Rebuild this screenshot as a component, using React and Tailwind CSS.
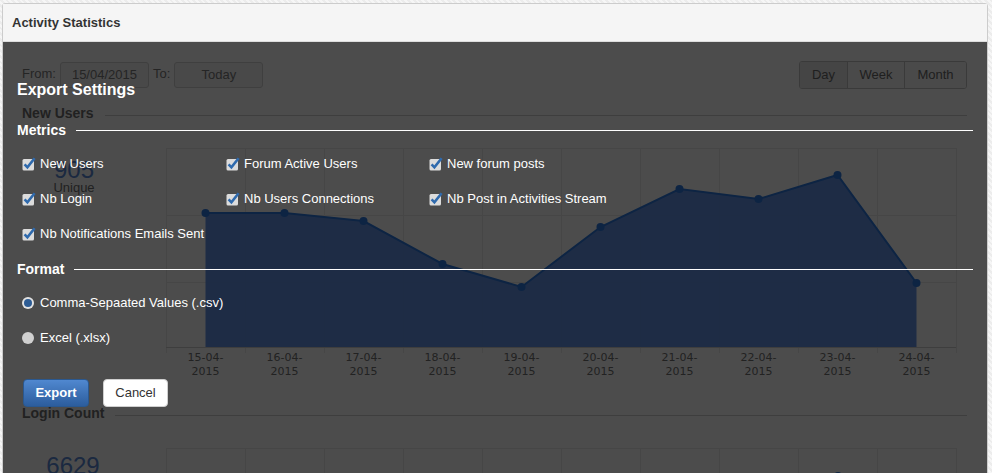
import React from 'react';

const days = ['15', '16', '17', '18', '19', '20', '21', '22', '23', '24'];
const points = [65, 65, 73, 116, 139, 79, 41, 51, 27, 135];

const metrics = [
    'New Users', 'Forum Active Users', 'New forum posts',
    'Nb Login', 'Nb Users Connections', 'Nb Post in Activities Stream',
    'Nb Notifications Emails Sent',
];

function Checkbox() {
    return (
        <svg width="14" height="14" viewBox="0 0 14 14" className="shrink-0">
            <rect x="0.5" y="2" width="11.5" height="11.5" rx="1.5" fill="#dcdcdc" />
            <path d="M2.6 7.4 L5.4 10.3 L12.6 1.2" fill="none" stroke="#2f6aad" strokeWidth="2.6" strokeLinejoin="miter" />
        </svg>
    );
}

function Legend({ label }) {
    return (
        <div className="flex items-center gap-[10px] h-[16px]">
            <span className="text-[14px] font-bold leading-[16px] text-white">{label}</span>
            <div className="flex-1 h-px bg-white" />
        </div>
    );
}

function AreaChart() {
    const cols = Array.from({ length: 11 }, (_, i) => i * 79 + 0.5);
    const pts = points.map((y, i) => [39.5 + i * 79, y]);
    const line = pts.map((p) => p.join(',')).join(' ');
    const area = `${pts[0][0]},199 ${line} ${pts[9][0]},199`;
    return (
        <svg width="800" height="240" viewBox="0 0 800 240" className="block shrink-0">
            {cols.map((x) => (
                <line key={x} x1={x} y1="0" x2={x} y2="205" stroke="#e9e9e9" />
            ))}
            {[0.5, 67.5, 134.5].map((y) => (
                <line key={y} x1="0" y1={y} x2="790" y2={y} stroke="#e9e9e9" />
            ))}
            <polygon points={area} fill="#568ae3" fillOpacity="0.9" />
            <polyline points={line} fill="none" stroke="#2c78e0" strokeWidth="2" />
            {pts.map(([x, y]) => (
                <circle key={x} cx={x} cy={y} r="4" fill="#2c78e0" />
            ))}
            <line x1="0" y1="199.5" x2="790" y2="199.5" stroke="#cfcfcf" />
            {days.map((d, i) => (
                <text key={d} x={39.5 + i * 79} textAnchor="middle" fontSize="11" fill="#737373"
                      style={{ fontFamily: '"DejaVu Sans", Verdana, sans-serif' }}>
                    <tspan x={39.5 + i * 79} y="213">{d}-04-</tspan>
                    <tspan x={39.5 + i * 79} y="227">2015</tspan>
                </text>
            ))}
        </svg>
    );
}

function BottomGrid() {
    const cols = Array.from({ length: 11 }, (_, i) => i * 79 + 0.5);
    return (
        <svg width="800" height="40" viewBox="0 0 800 40" className="block shrink-0">
            {cols.map((x) => (
                <line key={x} x1={x} y1="0" x2={x} y2="40" stroke="#e9e9e9" />
            ))}
            <line x1="0" y1="0.5" x2="790" y2="0.5" stroke="#e9e9e9" />
            <circle cx="672" cy="28" r="4" fill="#2c78e0" />
        </svg>
    );
}

export default function App() {
    return (
        <div className="w-[992px] h-[473px] overflow-hidden pt-[3px] pl-[2px] bg-[repeating-linear-gradient(45deg,#f6f6f6_0px,#f6f6f6_2px,#ececec_2px,#ececec_4px)]"
             style={{ fontFamily: '"Liberation Sans", Arial, sans-serif' }}>
            <div className="w-[986px] h-[480px] border border-[#cccccc] rounded-t-[3px] bg-white flex flex-col">
                {/* header */}
                <div className="h-[38px] shrink-0 bg-[#f5f5f5] border-b border-[#dddddd] flex items-center pl-[9px]">
                    <span className="text-[13px] font-bold text-[#333333]">Activity Statistics</span>
                </div>

                {/* body */}
                <div className="relative flex-1 overflow-hidden">
                    <div className="flex flex-col pt-[19px] pl-[19px] pr-[20px]">
                        <div className="flex items-center h-[28px]">
                            <span className="text-[13px] text-[#7c7c7c] -mt-[3px]">From:</span>
                            <div className="ml-[4px] w-[89px] h-[26px] border border-[#d2d2d2] rounded-[3px] bg-[#f4f4f4] flex items-center justify-center text-[13px] text-[#7c7c7c]">15/04/2015</div>
                            <span className="ml-[4px] text-[13px] text-[#7c7c7c] -mt-[3px]">To:</span>
                            <div className="ml-[4px] w-[89px] h-[26px] border border-[#d2d2d2] rounded-[3px] bg-[#f4f4f4] flex items-center justify-center text-[13px] text-[#7c7c7c]">Today</div>
                            <div className="ml-auto flex h-[28px] border border-[#c4c4c4] rounded-[3px] overflow-hidden text-[13px] text-[#6a6a6a]">
                                <div className="w-[48px] flex items-center justify-center bg-[#e6e6e6] border-r border-[#c4c4c4]">Day</div>
                                <div className="w-[57px] flex items-center justify-center bg-[#f8f8f8] border-r border-[#c4c4c4]">Week</div>
                                <div className="w-[61px] flex items-center justify-center bg-[#f8f8f8]">Month</div>
                            </div>
                        </div>

                        <div className="mt-[16px] flex items-center gap-[11px] h-[16px]">
                            <span className="text-[14px] font-bold text-[#707070]">New Users</span>
                            <div className="flex-1 h-px bg-[#d0d0d0] mt-[4px]" />
                        </div>

                        <div className="mt-[27px] flex">
                            <div className="w-[104px] pt-[11px] flex flex-col items-center">
                                <span className="text-[24px] leading-[22px] text-[#5a8ad8]">905</span>
                                <span className="text-[13px] leading-[14px] text-[#707070]">Unique</span>
                            </div>
                            <div className="ml-[40px]">
                                <AreaChart />
                            </div>
                        </div>

                        <div className="mt-[17px] flex items-center gap-[11px] h-[16px]">
                            <span className="text-[14px] font-bold text-[#707070]">Login Count</span>
                            <div className="flex-1 h-px bg-[#d0d0d0] mt-[4px]" />
                        </div>

                        <div className="mt-[27px] flex">
                            <div className="w-[104px] pt-[7px] flex flex-col items-center">
                                <span className="text-[24px] leading-[22px] text-[#5a8ad8] -ml-[2px]">6629</span>
                            </div>
                            <div className="ml-[40px]">
                                <BottomGrid />
                            </div>
                        </div>
                    </div>

                    {/* modal overlay */}
                    <div className="absolute inset-0 bg-black/70 flex flex-col pt-[38px] pl-[14px] pr-[14px] text-white">
                        <div className="text-[16px] font-bold leading-[20px]">Export Settings</div>

                        <div className="mt-[22px]">
                            <Legend label="Metrics" />
                        </div>
                        <div className="mt-[8px] ml-[5px] grid grid-cols-[204px_203px_1fr]">
                            {metrics.map((m) => (
                                <div key={m} className="h-[35px] flex items-center gap-[4px] text-[13px]">
                                    <Checkbox />
                                    <span>{m}</span>
                                </div>
                            ))}
                        </div>

                        <div className="mt-[10px]">
                            <Legend label="Format" />
                        </div>
                        <div className="mt-[8px] ml-[5px] flex flex-col">
                            <div className="h-[35px] flex items-center gap-[6px] text-[13px]">
                                <span className="w-[12px] h-[12px] rounded-full bg-[#e2e2e2] flex items-center justify-center">
                                    <span className="w-[8px] h-[8px] rounded-full bg-[#2d5c94]" />
                                </span>
                                <span>Comma-Sepaated Values (.csv)</span>
                            </div>
                            <div className="h-[35px] flex items-center gap-[6px] text-[13px]">
                                <span className="w-[12px] h-[12px] rounded-full bg-[#d0d0d0]" />
                                <span>Excel (.xlsx)</span>
                            </div>
                        </div>

                        <div className="mt-[24px] ml-[6px] flex gap-[14px]">
                            <button className="w-[66px] h-[28px] rounded-[4px] border border-[#2a5890] bg-linear-to-b from-[#5088d0] to-[#2c5d9d] text-[13px] font-bold text-white">
                                Export
                            </button>
                            <button className="w-[65px] h-[28px] rounded-[4px] border border-[#cfcfcf] bg-white text-[13px] text-[#333333]">
                                Cancel
                            </button>
                        </div>
                    </div>
                </div>
            </div>
        </div>
    );
}
